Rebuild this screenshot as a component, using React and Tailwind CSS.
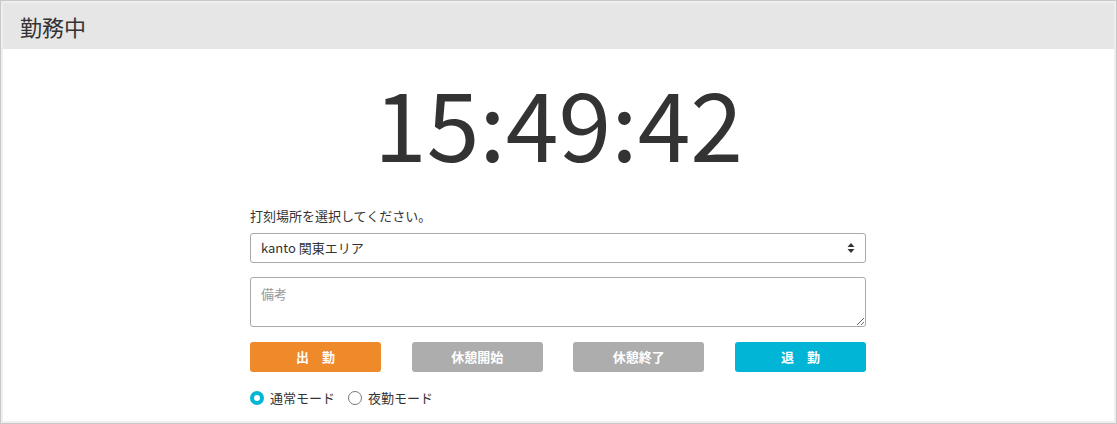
import { useState } from 'react';

const btns = [
  { label: '出　勤', cls: 'bg-[#ef8a2b]' },
  { label: '休憩開始', cls: 'bg-[#adadad]' },
  { label: '休憩終了', cls: 'bg-[#adadad]' },
  { label: '退　勤', cls: 'bg-[#00b5d5]' },
];

const App = () => {
  const [mode, setMode] = useState('normal');

  return (
    <div className="h-[424px] w-full border border-[#c8c8c8] bg-[#efefef] p-[2px] font-['Noto_Sans_CJK_JP',sans-serif] text-[#333]">
      <div className="h-full bg-white flex flex-col">
        <div className="h-[46px] bg-[#e6e6e6] pl-[17px] flex items-center text-[22px]">勤務中</div>

        <div className="mt-[24px] text-center text-[95px] leading-none">15:49:42</div>

        <div className="w-[616px] ml-[247px] mt-[38px]">
          <p className="text-[13px] leading-[20px]">打刻場所を選択してください。</p>
          <div className="relative mt-[7px]">
            <select className="w-full h-[30px] appearance-none border border-[#aaa] rounded-[3px] pl-[10px] text-[13px] text-[#333] bg-white focus:outline-none">
              <option>kanto 関東エリア</option>
              <option>kansai 関西エリア</option>
            </select>
            <svg className="absolute right-[11px] top-1/2 -translate-y-1/2 pointer-events-none" width="8" height="11" viewBox="0 0 8 11">
              <path d="M4 0.5 L7.5 4.5 H0.5 Z" fill="#333" />
              <path d="M4 10.5 L7.5 6.5 H0.5 Z" fill="#333" />
            </svg>
          </div>
          <textarea placeholder="備考"
            className="block w-full h-[50px] mt-[14px] border border-[#aaa] rounded-[3px] px-[10px] py-[6px] text-[13px] placeholder:text-[#999] focus:outline-none" />

          <div className="flex justify-between mt-[15px]">
            {btns.map((b) => (
              <button key={b.label} className={`w-[131px] h-[30px] rounded-[3px] text-white font-bold text-[13px] ${b.cls}`}>
                {b.label}
              </button>
            ))}
          </div>

          <div className="flex items-center mt-[16px] text-[13px]">
            <label className="flex items-center cursor-pointer" onClick={() => setMode('normal')}>
              {mode === 'normal'
                ? <span className="w-[14px] h-[14px] rounded-full border-[4px] border-[#00b5d5] bg-white" />
                : <span className="w-[14px] h-[14px] rounded-full border border-[#777] bg-white" />}
              <span className="ml-[6px]">通常モード</span>
            </label>
            <label className="flex items-center cursor-pointer ml-[13px]" onClick={() => setMode('night')}>
              {mode === 'night'
                ? <span className="w-[14px] h-[14px] rounded-full border-[4px] border-[#00b5d5] bg-white" />
                : <span className="w-[14px] h-[14px] rounded-full border border-[#777] bg-white" />}
              <span className="ml-[6px]">夜勤モード</span>
            </label>
          </div>
        </div>
      </div>
    </div>
  );
};

export default App;
